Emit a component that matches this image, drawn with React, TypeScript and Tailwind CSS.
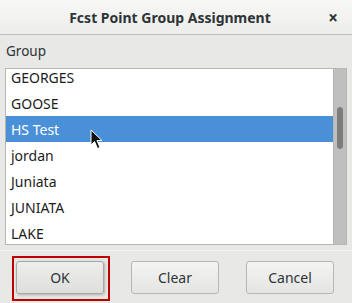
import React from 'react'

const groups = ['GEORGES', 'GOOSE', 'HS Test', 'jordan', 'Juniata', 'JUNIATA', 'LAKE']

function Cursor() {
  return (
    <svg width="14" height="21" viewBox="0 0 14 21" className="absolute left-[84px] top-[13px]">
      <path d="M1 1 L1 16 L4.5 12.5 L7.5 19.5 L10 18.5 L7 11.5 L12 11.5 Z" fill="#111" stroke="#fff" strokeWidth="1" />
    </svg>
  )
}

export default function App() {
  const selected = 'HS Test'

  return (
    <div
      className="relative h-[303px] w-[352px] overflow-hidden bg-[#e8e8e7] text-[#2e3436]"
      style={{ fontFamily: '"Noto Sans", "Open Sans", sans-serif' }}
    >
      {/* title bar */}
      <div className="flex h-[35px] items-center border-b border-[#bfbfbc] bg-gradient-to-b from-[#f7f7f6] to-[#ededec]">
        <div className="flex-1 pl-[24px] text-center text-[14px] font-bold">Fcst Point Group Assignment</div>
        <div className="w-[36px] pr-[2px] text-center text-[17px] font-bold leading-none">×</div>
      </div>

      <div className="px-[5px] pt-[7px]">
        <div className="pl-[1px] text-[13.5px] leading-[18px]">Group</div>

        <div className="mt-[8px] flex h-[177px] border border-[#b6b6b3] bg-white">
          <div className="flex-1 overflow-hidden">
            {groups.map((g, i) => (
              <div
                key={g}
                className={`relative flex h-[26px] items-center pl-[5px] text-[14px] ${
                  g === selected ? 'bg-[#4a90d9] text-white' : 'text-[#1c1c1c]'
                } ${i === 0 ? '-mt-[5px]' : ''}`}
              >
                {g}
                {g === selected && <Cursor />}
              </div>
            ))}
          </div>
          <div className="relative w-[13px] border-l border-[#b6b6b3] bg-[#c0bfbf]">
            <div className="absolute left-[3px] top-[38px] h-[42px] w-[6px] rounded-full bg-[#7d7d7c]" />
          </div>
        </div>
      </div>

      <div className="mt-[5px] border-t border-[#f2f2f1]" />

      <div className="flex justify-between pl-[16px] pr-[18px] pt-[10px]">
        <div className="relative">
          <div className="absolute -left-[4px] -top-[5px] h-[45px] w-[98px] border-2 border-[#c00000]" />
          <button className="h-[33px] w-[88px] rounded-[3px] border border-[#a8a8a5] bg-gradient-to-b from-[#eeeeed] to-[#dededd] text-[14px] shadow-[1px_1px_3px_rgba(0,0,0,0.25)]">
            OK
          </button>
        </div>
        <button className="h-[33px] w-[88px] rounded-[3px] border border-[#b6b6b3] bg-gradient-to-b from-[#f4f4f3] to-[#e4e4e3] text-[14px]">
          Clear
        </button>
        <button className="h-[33px] w-[88px] rounded-[3px] border border-[#b6b6b3] bg-gradient-to-b from-[#f4f4f3] to-[#e4e4e3] text-[14px]">
          Cancel
        </button>
      </div>
    </div>
  )
}
